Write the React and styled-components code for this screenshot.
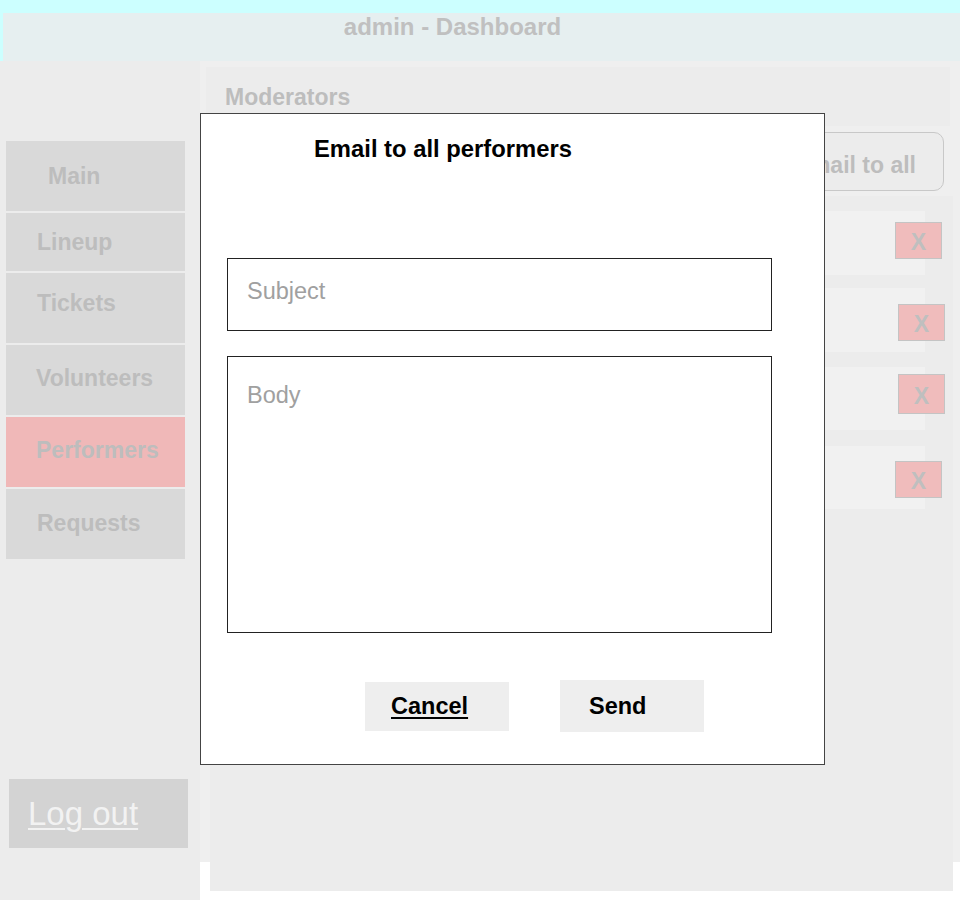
import React from 'react';
import styled, { createGlobalStyle } from 'styled-components';

const GlobalStyle = createGlobalStyle`
  html, body {
    margin: 0;
    padding: 0;
    background: #fff;
    font-family: "Liberation Sans", Arial, sans-serif;
  }
  * {
    box-sizing: border-box;
  }
`;

const Page = styled.div`
  position: relative;
  width: 960px;
  height: 900px;
  overflow: hidden;
`;

const TopBand = styled.div`
  background: #ccffff;
  padding: 13px 0 0 3px;
`;

const Header = styled.header`
  height: 48px;
  background: #e6eff0;
  padding: 1px 58px 0 0;
  text-align: center;
  font-size: 24px;
  line-height: 26px;
  font-weight: 700;
  color: #c0c0c0;
`;

const Layout = styled.div`
  display: flex;
  align-items: flex-start;
`;

const Sidebar = styled.aside`
  flex: none;
  width: 200px;
  height: 839px;
  background: #ececec;
  display: flex;
  flex-direction: column;
  padding-top: 80px;
`;

const Nav = styled.nav`
  display: flex;
  flex-direction: column;
  gap: 2px;
  margin-left: 6px;
  width: 179px;
`;

const NavItem = styled.div`
  flex: none;
  height: ${(props) => props.h}px;
  background: ${(props) => (props.$active ? '#f0b8b8' : '#d9d9d9')};
  display: flex;
  align-items: center;
  padding-left: ${(props) => props.pl}px;
  padding-bottom: ${(props) => props.lift || 0}px;
  font-size: 23px;
  font-weight: 700;
  color: #bdbdbd;
`;

const Logout = styled.a`
  display: flex;
  align-items: center;
  margin: 220px 0 0 9px;
  width: 179px;
  height: 69px;
  background: #d3d3d3;
  padding-left: 19px;
  font-size: 33px;
  color: #f2f2f2;
  text-decoration: underline;
  text-decoration-thickness: 2px;
  text-underline-offset: 3px;
`;

const Main = styled.main`
  flex: none;
  width: 760px;
  height: 801px;
  background: #efefef;
  padding-top: 6px;
  display: flex;
  flex-direction: column;
  & > * {
    flex-shrink: 0;
  }
`;

const ModBar = styled.div`
  margin-left: 6px;
  width: 744px;
  height: 59px;
  background: #ececec;
  display: flex;
  align-items: center;
  padding: 2px 0 0 19px;
  font-size: 23px;
  font-weight: 700;
  color: #bdbdbd;
`;

const Toolbar = styled.div`
  display: flex;
  justify-content: flex-end;
  margin-top: 6px;
  padding-right: 16px;
`;

const MailAllButton = styled.div`
  width: 180px;
  height: 59px;
  border: 1px solid #c8c8c8;
  border-radius: 10px;
  background: #ececec;
  display: flex;
  align-items: center;
  justify-content: flex-end;
  padding: 7px 27px 0 0;
  font-size: 23px;
  font-weight: 700;
  color: #bdbdbd;
`;

const List = styled.div`
  margin: 5px 0 0 10px;
  width: 743px;
  height: 695px;
  background: #ececec;
  padding: 15px 28px 0 10px;
  display: flex;
  flex-direction: column;
`;

const Row = styled.div`
  flex: none;
  height: ${(props) => props.h}px;
  margin-bottom: ${(props) => props.mb}px;
  background: #f1f1f1;
  display: flex;
  align-items: flex-start;
  justify-content: flex-end;
`;

const XButton = styled.div`
  flex: none;
  width: 47px;
  height: ${(props) => props.h}px;
  margin-top: ${(props) => props.top}px;
  margin-right: ${(props) => -props.overhang}px;
  background: #f0bcbc;
  border: 1px solid #c4c4c4;
  display: flex;
  align-items: center;
  justify-content: center;
  padding-top: 4px;
  font-size: 23px;
  font-weight: 700;
  color: #bfbfbf;
`;

const Modal = styled.div`
  position: absolute;
  left: 200px;
  top: 113px;
  width: 625px;
  height: 652px;
  background: #fff;
  border: 1px solid #444;
  padding: 21px 0 0 26px;
  display: flex;
  flex-direction: column;
`;

const ModalTitle = styled.h2`
  margin: 0 0 0 87px;
  font-size: 23.8px;
  line-height: 28px;
  font-weight: 700;
  color: #000;
`;

const SubjectInput = styled.input`
  margin-top: 95px;
  width: 545px;
  height: 73px;
  border: 1px solid #222;
  padding: 0 19px 6px;
  font-family: inherit;
  font-size: 23.5px;
  color: #333;
  outline: none;
  &::placeholder {
    color: #a0a0a0;
  }
`;

const BodyInput = styled.textarea`
  margin-top: 25px;
  width: 545px;
  height: 277px;
  border: 1px solid #222;
  padding: 25px 19px;
  font-family: inherit;
  font-size: 23.5px;
  line-height: 26px;
  color: #333;
  resize: none;
  outline: none;
  &::placeholder {
    color: #a0a0a0;
  }
`;

const Actions = styled.div`
  display: flex;
  align-items: center;
  gap: 51px;
  margin-top: 47px;
  padding-left: 138px;
`;

const ActionButton = styled.div`
  width: 144px;
  height: ${(props) => props.h}px;
  background: #eeeeee;
  display: flex;
  align-items: center;
  padding-left: ${(props) => props.pl}px;
  font-size: 23.5px;
  font-weight: 700;
  color: #000;
  text-decoration: ${(props) => (props.$underline ? 'underline' : 'none')};
  text-decoration-thickness: 2px;
  text-underline-offset: 3px;
`;

const navItems = [
  { label: 'Main', h: 70, pl: 42 },
  { label: 'Lineup', h: 58, pl: 31 },
  { label: 'Tickets', h: 70, pl: 31, lift: 10 },
  { label: 'Volunteers', h: 70, pl: 30, lift: 3 },
  { label: 'Performers', h: 70, pl: 30, lift: 3, active: true },
  { label: 'Requests', h: 70, pl: 31, lift: 1 },
];

const rows = [
  { h: 64, mb: 13, top: 11, overhang: 17, xh: 37 },
  { h: 64, mb: 15, top: 16, overhang: 20, xh: 37 },
  { h: 63, mb: 16, top: 7, overhang: 20, xh: 40 },
  { h: 63, mb: 0, top: 15, overhang: 17, xh: 37 },
];

const App = () => {
  return (
    <>
      <GlobalStyle />
      <Page>
        <TopBand>
          <Header>admin - Dashboard</Header>
        </TopBand>
        <Layout>
          <Sidebar>
            <Nav>
              {navItems.map((item) => (
                <NavItem
                  key={item.label}
                  h={item.h}
                  pl={item.pl}
                  lift={item.lift}
                  $active={item.active}
                >
                  {item.label}
                </NavItem>
              ))}
            </Nav>
            <Logout>Log out</Logout>
          </Sidebar>
          <Main>
            <ModBar>Moderators</ModBar>
            <Toolbar>
              <MailAllButton>Email to all</MailAllButton>
            </Toolbar>
            <List>
              {rows.map((row, index) => (
                <Row key={index} h={row.h} mb={row.mb}>
                  <XButton top={row.top} overhang={row.overhang} h={row.xh}>
                    X
                  </XButton>
                </Row>
              ))}
            </List>
          </Main>
        </Layout>
        <Modal>
          <ModalTitle>Email to all performers</ModalTitle>
          <SubjectInput placeholder="Subject" />
          <BodyInput placeholder="Body" />
          <Actions>
            <ActionButton h={49} pl={26} $underline>
              Cancel
            </ActionButton>
            <ActionButton h={52} pl={29}>
              Send
            </ActionButton>
          </Actions>
        </Modal>
      </Page>
    </>
  );
};

export default App;
